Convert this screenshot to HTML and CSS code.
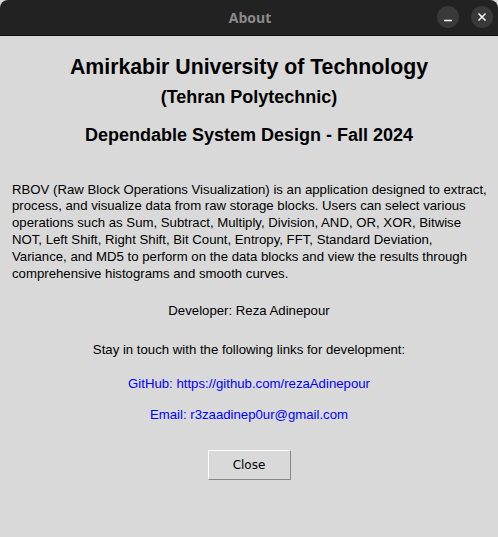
FILE: index.html
```html
<!DOCTYPE html>
<html>
<head>
<meta charset="utf-8">
<title>About</title>
<link rel="stylesheet" href="styles.css">
</head>
<body>
<div class="window">
  <div class="titlebar">
    <span class="title">About</span>
    <div class="controls">
      <span class="ctl">
        <svg width="10" height="10" viewBox="0 0 10 10"><path d="M1 8.5H9" stroke="#fff" stroke-width="1.5"/></svg>
      </span>
      <span class="ctl">
        <svg width="10" height="10" viewBox="0 0 10 10"><path d="M1.5 1.5L8.5 8.5M8.5 1.5L1.5 8.5" stroke="#fff" stroke-width="1.5"/></svg>
      </span>
    </div>
  </div>
  <div class="content">
    <h1 class="h1">Amirkabir University of Technology</h1>
    <h2 class="h2">(Tehran Polytechnic)</h2>
    <h2 class="h3">Dependable System Design - Fall 2024</h2>
    <p class="para">RBOV (Raw Block Operations Visualization) is an application designed to extract,<br>process, and visualize data from raw storage blocks. Users can select various<br>operations such as Sum, Subtract, Multiply, Division, AND, OR, XOR, Bitwise<br>NOT, Left Shift, Right Shift, Bit Count, Entropy, FFT, Standard Deviation,<br>Variance, and MD5 to perform on the data blocks and view the results through<br>comprehensive histograms and smooth curves.</p>
    <p class="line dev">Developer: Reza Adinepour</p>
    <p class="line stay">Stay in touch with the following links for development:</p>
    <p class="line link gh">GitHub: https://github.com/rezaAdinepour</p>
    <p class="line link mail">Email: r3zaadinep0ur@gmail.com</p>
    <button class="btn">Close</button>
  </div>
</div>
</body>
</html>
```
FILE: styles.css
```css
html, body {
  margin: 0;
  padding: 0;
  width: 498px;
  height: 537px;
  overflow: hidden;
  background: #d9d9d9;
}
.window {
  width: 498px;
  height: 537px;
  display: flex;
  flex-direction: column;
  background: #d9d9d9;
}
.titlebar {
  height: 35px;
  background: #222222;
  border-bottom: 1px solid #0e0e0e;
  border-radius: 8px 8px 0 0;
  position: relative;
  display: flex;
  align-items: center;
  justify-content: center;
  flex-shrink: 0;
}
.title {
  font-family: "Open Sans", "Noto Sans", sans-serif;
  font-weight: 700;
  font-size: 14px;
  color: #8a8a8a;
  margin-left: 2px;
}
.controls {
  position: absolute;
  right: 5px;
  top: 6px;
  display: flex;
  gap: 12px;
}
.ctl {
  width: 22px;
  height: 22px;
  border-radius: 50%;
  background: #393939;
  display: flex;
  align-items: center;
  justify-content: center;
}
.content {
  display: flex;
  flex-direction: column;
  align-items: center;
  font-family: "Liberation Sans", Arial, sans-serif;
  color: #000;
}
.h1 {
  margin: 18.5px 0 0;
  font-size: 21.3px;
  line-height: 25px;
  font-weight: 700;
}
.h2 {
  margin: 6.5px 0 0;
  font-size: 18px;
  line-height: 22px;
  font-weight: 700;
}
.h3 {
  margin: 16px 0 0;
  font-size: 18px;
  line-height: 22px;
  font-weight: 700;
}
.para {
  align-self: stretch;
  margin: 35.6px 0 0;
  padding: 0 12px;
  font-size: 13.2px;
  line-height: 16.8px;
  text-align: left;
  white-space: nowrap;
}
.line {
  margin: 0;
  font-size: 13.2px;
  line-height: 16.8px;
}
.dev { margin-top: 20.2px; }
.stay { margin-top: 22.2px; }
.gh { margin-top: 17.2px; }
.mail { margin-top: 14.2px; }
.link { color: #0000ff; }
.btn {
  margin-top: 26.6px;
  width: 83px;
  height: 30px;
  background: #d9d9d9;
  border: 1px solid;
  border-color: #ffffff #888888 #888888 #ffffff;
  font-family: "DejaVu Sans", sans-serif;
  font-size: 12px;
  color: #000;
  padding: 0;
}
```
